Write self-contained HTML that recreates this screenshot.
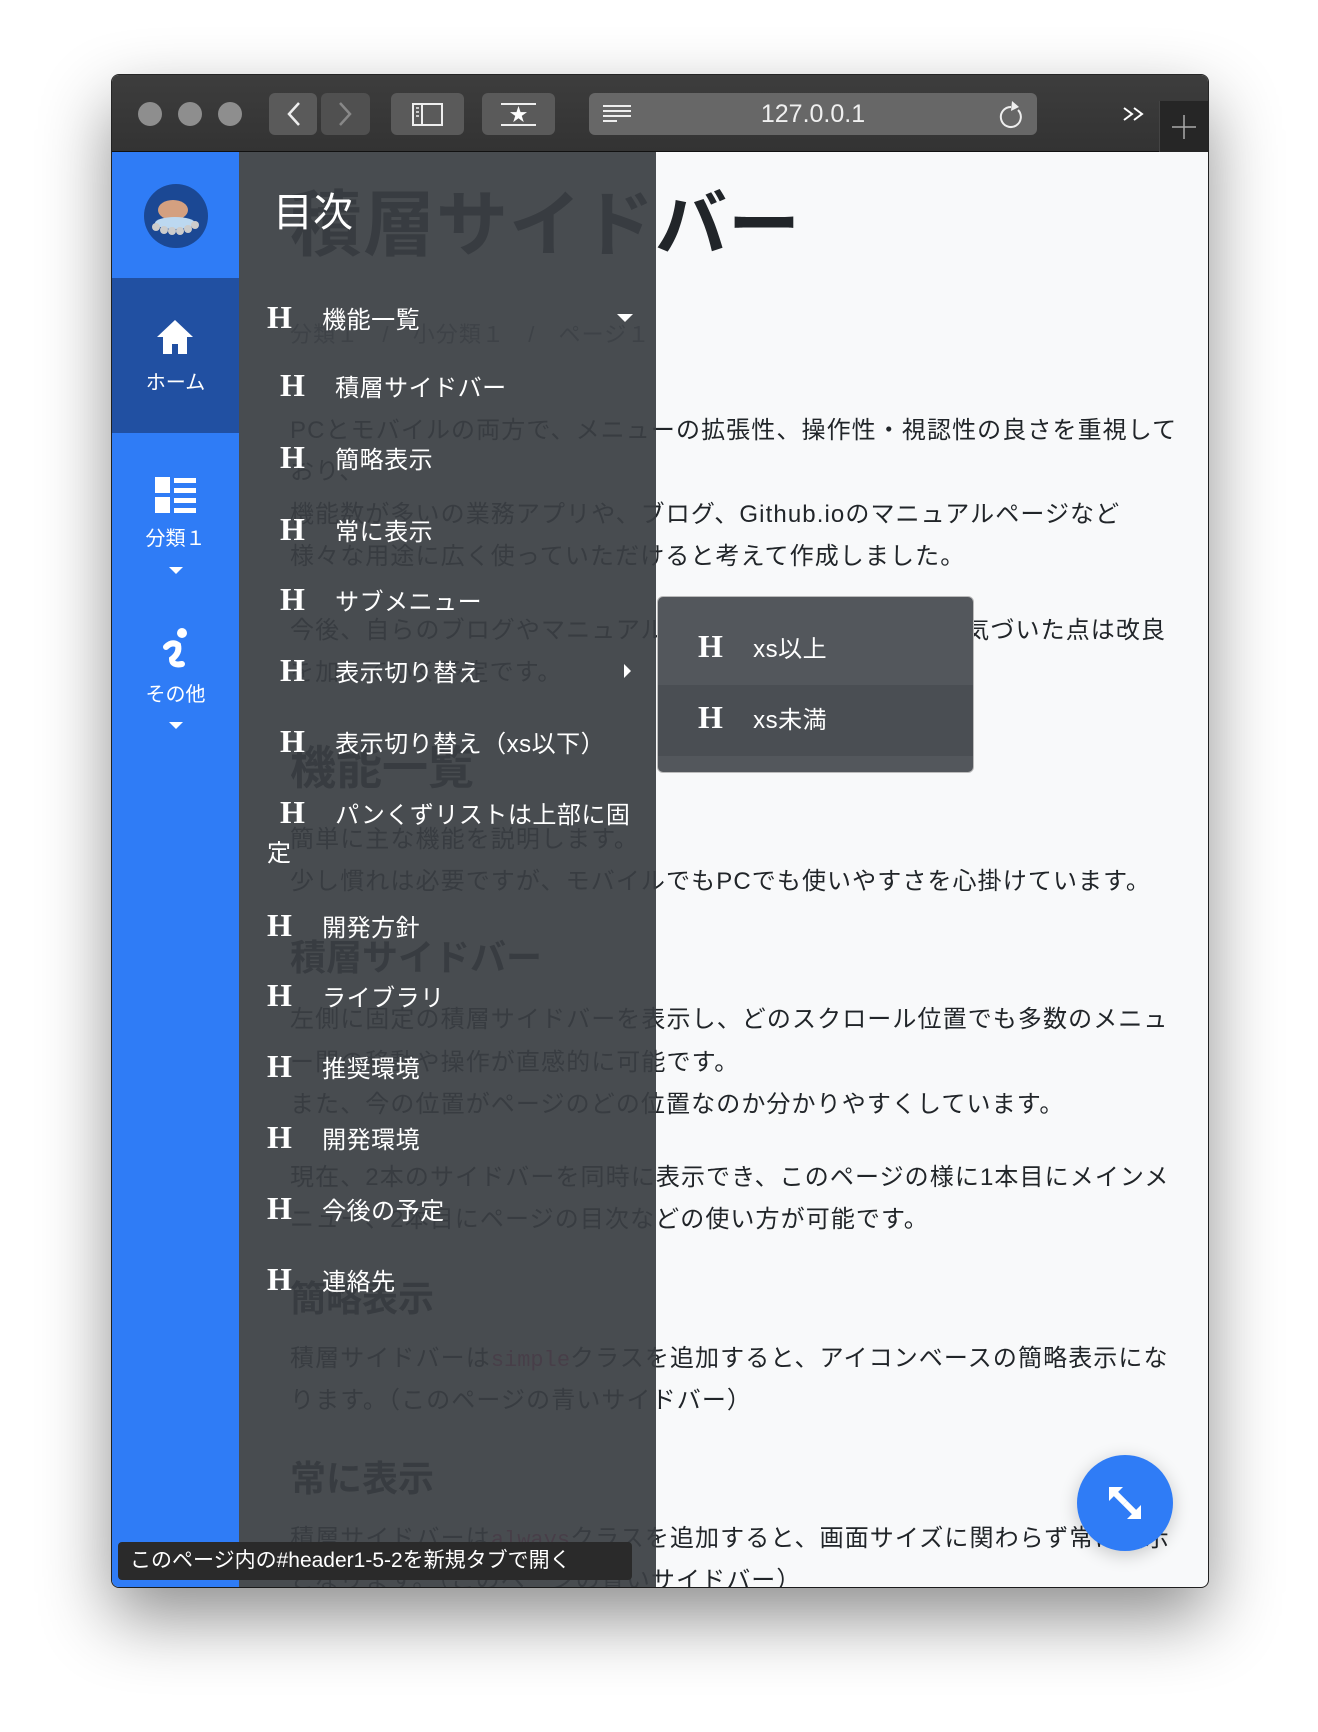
<!DOCTYPE html>
<html><head><meta charset="utf-8">
<style>
*{margin:0;padding:0;box-sizing:border-box}
body{width:1318px;height:1732px;background:#fff;position:relative;overflow:hidden;font-family:"Liberation Sans","Noto Sans CJK JP",sans-serif}
.abs{position:absolute}
#win{position:absolute;left:112px;top:75px;width:1096px;height:1512px;border-radius:7px;overflow:hidden;background:#f8f9fa;box-shadow:0 30px 70px rgba(0,0,0,.45),0 0 0 1px #2a2a2a}
#tb{position:absolute;left:0;top:0;width:1097px;height:77px;background:linear-gradient(#3d3d3d,#333);border-bottom:1px solid #111}
.dot{position:absolute;top:27px;width:24px;height:24px;border-radius:50%;background:#8e8e8e}
.btn{position:absolute;top:18px;height:42px;background:#5a5a5a;border-radius:6px}
#content{position:absolute;left:0;top:77px;width:1097px;height:1436px;overflow:hidden}
.t{position:absolute;left:178px;color:#212529;font-size:24px;letter-spacing:1.1px;white-space:nowrap;line-height:30px}
.h{position:absolute;left:178px;color:#212529;font-weight:bold;white-space:nowrap}
code{font-family:"Liberation Mono",monospace;color:#e83e8c;font-size:22px;letter-spacing:0}
#side{position:absolute;left:0;top:0;width:127px;height:1436px;background:#2f7cf6}
#toc{position:absolute;left:127px;top:0;width:417px;height:1436px;background:rgba(58,62,67,.93)}
.ti{position:absolute;color:#fff;font-size:24px;white-space:nowrap;line-height:30px;letter-spacing:.5px}
.H{font-family:"Liberation Serif",serif;font-weight:bold;font-size:32px;display:inline-block;width:48px}
.sl{position:absolute;color:#fff;font-size:20px;width:127px;text-align:center}
</style></head><body>
<div id="win">
 <div id="tb">
  <div class="dot" style="left:26px"></div><div class="dot" style="left:66px"></div><div class="dot" style="left:106px"></div>
  <div class="btn" style="left:157px;width:48px"></div><div class="btn" style="left:209px;width:49px;background:#505050"></div>
  <svg class="abs" style="left:157px;top:18px" width="101" height="42"><path d="M30 10 L20 21 L30 32" stroke="#eee" stroke-width="2.5" fill="none"/><path d="M71 10 L81 21 L71 32" stroke="#888" stroke-width="2.5" fill="none"/></svg>
  <div class="btn" style="left:279px;width:73px"></div>
  <svg class="abs" style="left:279px;top:18px" width="73" height="42"><rect x="22" y="11" width="29" height="21" fill="none" stroke="#eee" stroke-width="2"/><line x1="31" y1="11" x2="31" y2="32" stroke="#eee" stroke-width="2"/><path d="M25 15h3M25 19h3M25 23h3" stroke="#eee" stroke-width="1.5"/></svg>
  <div class="btn" style="left:370px;width:73px"></div>
  <svg class="abs" style="left:370px;top:18px" width="73" height="42"><line x1="19" y1="11" x2="54" y2="11" stroke="#eee" stroke-width="2"/><line x1="19" y1="32" x2="54" y2="32" stroke="#eee" stroke-width="2"/><text x="36.5" y="28" fill="#fff" font-size="18" text-anchor="middle">★</text></svg>
  <div class="btn" style="left:477px;width:448px;background:#676767"></div>
  <svg class="abs" style="left:477px;top:18px" width="448" height="42"><path d="M14 13h28M14 18h28M14 23h28M14 28h14" stroke="#eee" stroke-width="2"/><path d="M422 14 A10 10 0 1 0 429 17" stroke="#eee" stroke-width="2" fill="none"/><path d="M423 8 L430 14 L422 18Z" fill="#eee"/></svg>
  <div class="abs" style="left:477px;top:18px;width:448px;line-height:42px;text-align:center;color:#f0f0f0;font-size:25px">127.0.0.1</div>
  <svg class="abs" style="left:1010px;top:30px" width="24" height="18"><path d="M2 3 L10 9 L2 15 M12 3 L20 9 L12 15" stroke="#fff" stroke-width="2" fill="none"/></svg>
  <div class="abs" style="left:1047px;top:26px;width:50px;height:51px;background:#262626;border-left:1px solid #444"></div>
  <svg class="abs" style="left:1047px;top:26px" width="50" height="51"><path d="M25 14v24M13 26h24" stroke="#aaa" stroke-width="1.5"/></svg>
 </div>
 <div id="content">
  <div class="h" style="top:34px;font-size:72px;line-height:80px;letter-spacing:1px">積層サイドバー</div>
  <div class="t" style="top:168px;color:#6c757d;font-size:22px">分類１　/　小分類１　/　ページ１</div>
  <div class="t" style="top:264px">PCとモバイルの両方で、メニューの拡張性、操作性・視認性の良さを重視して</div>
  <div class="t" style="top:305px">おり、</div>
  <div class="t" style="top:348px">機能数が多いの業務アプリや、ブログ、Github.ioのマニュアルページなど</div>
  <div class="t" style="top:390px">様々な用途に広く使っていただけると考えて作成しました。</div>
  <div class="t" style="top:464px">今後、自らのブログやマニュアルページに活用予定であり、気づいた点は改良</div>
  <div class="t" style="top:506px">を加えていく予定です。</div>
  <div class="h" style="top:588px;font-size:46px;line-height:56px">機能一覧</div>
  <div class="t" style="top:673px">簡単に主な機能を説明します。</div>
  <div class="t" style="top:715px">少し慣れは必要ですが、モバイルでもPCでも使いやすさを心掛けています。</div>
  <div class="h" style="top:784px;font-size:36px;line-height:44px">積層サイドバー</div>
  <div class="t" style="top:853px">左側に固定の積層サイドバーを表示し、どのスクロール位置でも多数のメニュ</div>
  <div class="t" style="top:896px">ー間の移動や操作が直感的に可能です。</div>
  <div class="t" style="top:938px">また、今の位置がページのどの位置なのか分かりやすくしています。</div>
  <div class="t" style="top:1011px">現在、2本のサイドバーを同時に表示でき、このページの様に1本目にメインメ</div>
  <div class="t" style="top:1053px">ニュー、2本目にページの目次などの使い方が可能です。</div>
  <div class="h" style="top:1125px;font-size:36px;line-height:44px">簡略表示</div>
  <div class="t" style="top:1192px">積層サイドバーは<code>simple</code>クラスを追加すると、アイコンベースの簡略表示にな</div>
  <div class="t" style="top:1234px">ります。（このページの青いサイドバー）</div>
  <div class="h" style="top:1305px;font-size:36px;line-height:44px">常に表示</div>
  <div class="t" style="top:1372px">積層サイドバーは<code>always</code>クラスを追加すると、画面サイズに関わらず常に表示</div>
  <div class="t" style="top:1414px">となります。（このページの青いサイドバー）</div>

  <div id="side">
   <svg class="abs" style="left:31px;top:31px" width="66" height="66"><circle cx="33" cy="33" r="32" fill="#1b4894"/><ellipse cx="30" cy="27" rx="15" ry="10" fill="#d4a080"/><ellipse cx="32" cy="40" rx="20" ry="6" fill="#bcd8f0"/><g fill="#ccc"><circle cx="13" cy="44" r="4"/><circle cx="21" cy="47" r="4"/><circle cx="29" cy="48" r="4"/><circle cx="37" cy="48" r="4"/><circle cx="45" cy="46" r="4"/><circle cx="52" cy="42" r="4"/></g></svg>
   <div class="abs" style="left:0;top:126px;width:127px;height:155px;background:#2150a2"></div>
   <svg class="abs" style="left:43px;top:165px" width="40" height="40"><path d="M20 3 L2 20 H8 V37 H17 V27 H23 V37 H32 V20 H38Z" fill="#fff"/></svg>
   <div class="sl" style="top:214px">ホーム</div>
   <svg class="abs" style="left:43px;top:325px" width="42" height="38"><rect x="0" y="0" width="15" height="16" fill="#fff"/><rect x="0" y="20" width="15" height="16" fill="#fff"/><rect x="19" y="1" width="22" height="5" fill="#fff"/><rect x="19" y="11" width="22" height="5" fill="#fff"/><rect x="19" y="21" width="22" height="5" fill="#fff"/><rect x="19" y="31" width="22" height="5" fill="#fff"/></svg>
   <div class="sl" style="top:370px">分類１</div>
   <svg class="abs" style="left:57px;top:415px" width="14" height="8"><path d="M0 0H14L7 7Z" fill="#fff"/></svg>
   <svg class="abs" style="left:46px;top:475px" width="36" height="44"><circle cx="24" cy="6" r="5" fill="#fff"/><path d="M8 20 Q14 14 20 18 Q22 26 14 32 Q14 39 24 37" stroke="#fff" stroke-width="6" fill="none" stroke-linecap="round"/></svg>
   <div class="sl" style="top:526px">その他</div>
   <svg class="abs" style="left:57px;top:570px" width="14" height="8"><path d="M0 0H14L7 7Z" fill="#fff"/></svg>
  </div>

  <div id="toc">
   <div class="abs" style="left:34px;top:36px;color:#fff;font-size:40px;line-height:50px">目次</div>
   <div class="ti" style="left:28px;top:150px"><span class="H">H</span> 機能一覧</div>
   <svg class="abs" style="left:378px;top:162px" width="16" height="9"><path d="M0 0H16L8 8Z" fill="#fff"/></svg>
   <div class="ti" style="left:41px;top:218px"><span class="H">H</span> 積層サイドバー</div>
   <div class="ti" style="left:41px;top:290px"><span class="H">H</span> 簡略表示</div>
   <div class="ti" style="left:41px;top:362px"><span class="H">H</span> 常に表示</div>
   <div class="ti" style="left:41px;top:432px"><span class="H">H</span> サブメニュー</div>
   <div class="ti" style="left:41px;top:503px"><span class="H">H</span> 表示切り替え</div>
   <svg class="abs" style="left:385px;top:512px" width="8" height="14"><path d="M0 0V14L7 7Z" fill="#fff"/></svg>
   <div class="ti" style="left:41px;top:574px"><span class="H">H</span> 表示切り替え（xs以下）</div>
   <div class="ti" style="left:41px;top:645px"><span class="H">H</span> パンくずリストは上部に固</div>
   <div class="ti" style="left:28px;top:687px">定</div>
   <div class="ti" style="left:28px;top:758px"><span class="H">H</span> 開発方針</div>
   <div class="ti" style="left:28px;top:828px"><span class="H">H</span> ライブラリ</div>
   <div class="ti" style="left:28px;top:899px"><span class="H">H</span> 推奨環境</div>
   <div class="ti" style="left:28px;top:970px"><span class="H">H</span> 開発環境</div>
   <div class="ti" style="left:28px;top:1041px"><span class="H">H</span> 今後の予定</div>
   <div class="ti" style="left:28px;top:1112px"><span class="H">H</span> 連絡先</div>
  </div>

  <div class="abs" style="left:545px;top:444px;width:317px;height:177px;border:1px solid #bbb;border-radius:6px;background:#53575c;overflow:hidden">
   <div class="abs" style="left:0;top:88px;width:317px;height:71px;background:#4a4e53"></div>
   <div class="ti" style="left:40px;top:34px"><span class="H">H</span> xs以上</div>
   <div class="ti" style="left:40px;top:105px"><span class="H">H</span> xs未満</div>
  </div>

  <div class="abs" style="left:965px;top:1303px;width:96px;height:96px;border-radius:50%;background:#2f7cf6;box-shadow:0 4px 18px rgba(0,0,0,.2)"></div>
  <svg class="abs" style="left:965px;top:1303px" width="96" height="96"><path d="M32 32 H46 L32 46Z" fill="#fff"/><path d="M37 37 L48 48" stroke="#fff" stroke-width="6"/><path d="M64 64 H50 L64 50Z" fill="#fff"/><path d="M59 59 L48 48" stroke="#fff" stroke-width="6"/></svg>

  <div class="abs" style="left:6px;top:1390px;width:514px;height:38px;background:#2a2a2a;border-radius:4px;color:#fff;font-size:21px;line-height:38px;padding-left:12px;white-space:nowrap">このページ内の#header1-5-2を新規タブで開く</div>
 </div>
</div>
</body></html>
